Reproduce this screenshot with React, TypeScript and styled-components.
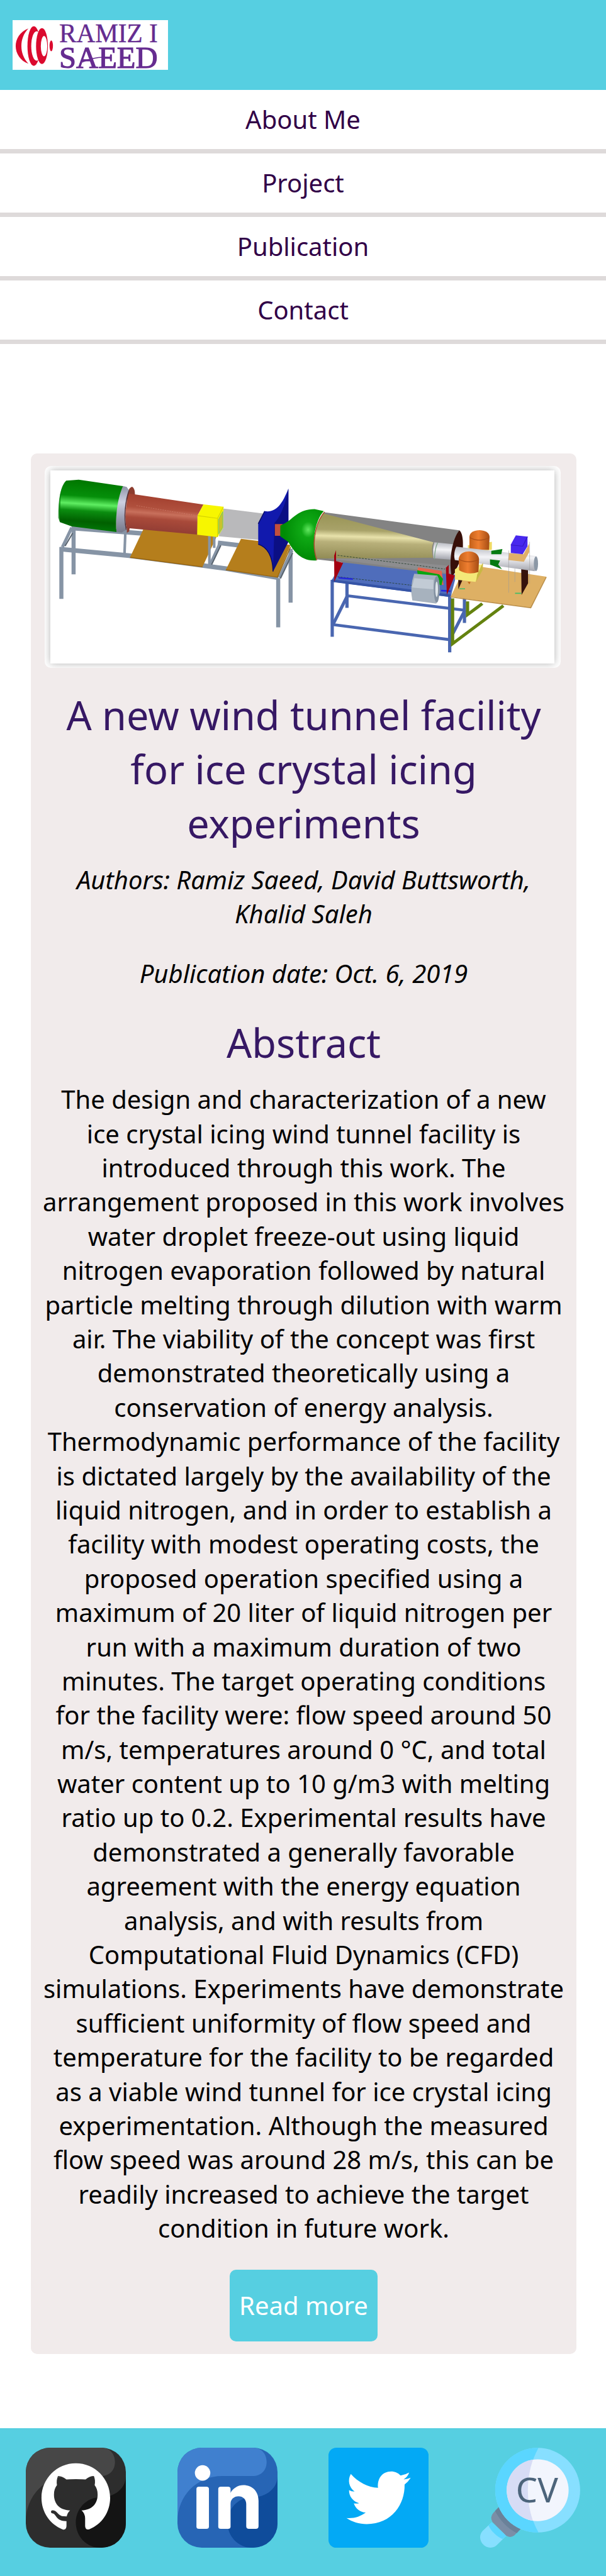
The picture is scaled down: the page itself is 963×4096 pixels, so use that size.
import React from "react";
import styled, { createGlobalStyle } from "styled-components";

const GlobalStyle = createGlobalStyle`
  * { box-sizing: border-box; }
  body {
    margin: 0;
    background: #ffffff;
    color: #000000;
    font-family: "Noto Sans", "Open Sans", sans-serif;
    font-size: 40px;
    line-height: 1.36;
  }
  svg { display: block; overflow: visible; }
`;

const Header = styled.header`
  display: flex;
  align-items: center;
  padding: 32px 20px;
  background: #56cfe1;
`;

const LogoLink = styled.a`
  display: block;
  width: 247px;
`;

const NavList = styled.ul`
  margin: 0;
  padding: 0;
  list-style: none;
`;

const NavItem = styled.li`
  border-bottom: 7px solid #dedada;
`;

const NavLink = styled.a`
  display: block;
  padding: 20px 0;
  line-height: 54px;
  text-align: center;
  text-decoration: none;
  color: #310047;
`;

const Main = styled.main`
  padding: 174px 47px 118px 49px;
`;

const Card = styled.article`
  display: flex;
  flex-direction: column;
  align-items: center;
  padding: 20px 18px;
  border-radius: 10px;
  background: #f1ebeb;
  text-align: center;
`;

const Figure = styled.figure`
  align-self: stretch;
  margin: 0 7px 32px 4px;
  padding: 7px 10px 7px 9px;
  border-radius: 10px;
  background: #ffffff;
  overflow: hidden;
`;

const Picture = styled.div`
  background: #ffffff;
  box-shadow: 0 0 12px rgba(0, 0, 0, 0.3);
`;

const Heading = styled.h2`
  margin: 0 0 20px;
  font-size: 63px;
  font-weight: 400;
  line-height: 86px;
  color: #361864;
`;

const Meta = styled.p`
  margin: 0 0 40px;
  font-style: italic;
`;

const Abstract = styled.p`
  margin: 0 0 38px;
`;

const MoreButton = styled.button`
  padding: 30px 15px;
  border: 0;
  border-radius: 10px;
  background: #56cfe1;
  color: #ffffff;
  font: inherit;
  line-height: 54px;
  cursor: pointer;
`;

const Footer = styled.footer`
  display: grid;
  grid-template-columns: repeat(4, 1fr);
  justify-items: center;
  padding: 31px 0 45px;
  background: #56cfe1;
`;

const IconLink = styled.a`
  display: block;
  width: 159px;
`;

function Logo() {
  return (
    <svg viewBox="0 0 300 96" role="img" aria-label="Ramiz I Saeed">
      <rect width="300" height="96" fill="#fff" />
      <g fill="#db0a2e">
        <path d="M30.5 16C14 22 6 37 6 50c0 14 9 29 24.500 34C21 74 17 62 17 50s4-24 13.500-34z" />
        <ellipse cx="41" cy="50" rx="12.300" ry="38.300" />
        <ellipse cx="46.500" cy="50" rx="10.500" ry="28.500" fill="#fff" />
        <ellipse cx="56.700" cy="50" rx="11.400" ry="34.600" />
        <ellipse cx="60.700" cy="50.300" rx="6.200" ry="19.500" fill="#fff" />
        <ellipse cx="74.600" cy="49.600" rx="3.300" ry="10.500" />
      </g>
      <g fill="#652c90" stroke="#652c90" fontFamily="'Liberation Serif', serif" textAnchor="middle">
        <text x="185" y="42.500" fontSize="50" strokeWidth="0.500">RAMIZ I</text>
        <text x="185" y="92" fontSize="59" strokeWidth="1.400">SAEED</text>
      </g>
      <path d="M134 81q30-13 57-8" fill="none" stroke="#652c90" strokeWidth="2" />
    </svg>
  );
}

function WindTunnel() {
  return (
    <svg viewBox="0 0 973 373" role="img" aria-label="Wind tunnel facility">
      <defs>
        <linearGradient id="drum" x1="0" y1="0" x2="-0.08" y2="1">
          <stop offset="0" stopColor="#007800" />
          <stop offset="0.280" stopColor="#058f0a" />
          <stop offset="0.430" stopColor="#5fee62" />
          <stop offset="0.560" stopColor="#0b8d10" />
          <stop offset="0.760" stopColor="#006000" />
          <stop offset="1" stopColor="#00820a" />
        </linearGradient>
        <linearGradient id="ring" x1="0" y1="0" x2="0" y2="1">
          <stop offset="0" stopColor="#8f93a6" />
          <stop offset="0.350" stopColor="#cdd0e2" />
          <stop offset="0.700" stopColor="#9a9db0" />
          <stop offset="1" stopColor="#75798a" />
        </linearGradient>
        <linearGradient id="brick" x1="0" y1="0" x2="-0.15" y2="1">
          <stop offset="0" stopColor="#a3402f" />
          <stop offset="0.300" stopColor="#b0503d" />
          <stop offset="0.420" stopColor="#c8705c" />
          <stop offset="0.550" stopColor="#a94a3a" />
          <stop offset="1" stopColor="#873731" />
        </linearGradient>
        <radialGradient id="bulb" cx="0.640" cy="0.400" r="0.550">
          <stop offset="0" stopColor="#62e860" />
          <stop offset="0.280" stopColor="#0fa915" />
          <stop offset="1" stopColor="#008c05" />
        </radialGradient>
        <linearGradient id="cone" x1="0.080" y1="0" x2="0" y2="1">
          <stop offset="0.080" stopColor="#9c975a" />
          <stop offset="0.350" stopColor="#a8a269" />
          <stop offset="0.490" stopColor="#e8e2ab" />
          <stop offset="0.620" stopColor="#b8b07a" />
          <stop offset="1" stopColor="#918b55" />
        </linearGradient>
        <linearGradient id="pipe" x1="0.060" y1="0" x2="0" y2="1">
          <stop offset="0" stopColor="#b9bbc2" />
          <stop offset="0.400" stopColor="#f4f4f7" />
          <stop offset="1" stopColor="#9b9da6" />
        </linearGradient>
        <linearGradient id="tank" x1="0" y1="0" x2="1" y2="0">
          <stop offset="0" stopColor="#c4611a" />
          <stop offset="0.450" stopColor="#ee7e30" />
          <stop offset="1" stopColor="#a44c14" />
        </linearGradient>
      </defs>

      {/* left stand and contraction section */}
      <g transform="translate(-48 -48.700) scale(0.35714 0.33333)">
        <g stroke="#8694a5" fill="none">
          <path d="M260 470V748M194 590V890M1366 770V1055M1433 600V912" strokeWidth="22" />
          <path d="M188 602L560 640L1090 716L1366 768" strokeWidth="27" />
          <path d="M250 480L640 512M1040 565L1170 582" strokeWidth="26" />
          <path d="M200 590L250 478M1372 768L1440 610M1000 690L1052 568" strokeWidth="17" />
          <path d="M541 470L535 635" strokeWidth="14" />
        </g>
        <path d="M214 584L255 510M1378 772L1444 625M1006 692L1056 580" stroke="#59646f" strokeWidth="7" />
        <path d="M638 485L1035 525L957 705L565 650z" fill="#b57e1c" />
        <path d="M1165 542L1433 578L1362 765L1083 722z" fill="#b57e1c" />
        <path d="M565 650L957 705M1083 722L1362 765L1433 590" stroke="#986510" strokeWidth="5" fill="none" />
        <path d="M994 525V690M1020 525V595" stroke="#8694a5" strokeWidth="14" />
        <path d="M1060 366L1285 396L1262 549L1045 528z" fill="#b9b9bb" />
        <path d="M548 300Q555 245 577 241Q592 250 592 290L560 500L548 508z" fill="#8d3c2e" />
        <path d="M560 280L962 344L930 408L930 518L545 480Q530 380 560 280z" fill="url(#brick)" />
        <path d="M600 350L925 408" stroke="#d48a78" strokeWidth="2" strokeDasharray="7 6" />
        <path d="M525 236L547 242L560 262C540 320 530 420 545 490L520 506L492 502C485 400 495 300 525 236z" fill="url(#ring)" />
        <path d="M560 262C540 320 530 420 545 490" stroke="#553038" strokeWidth="5" fill="none" />
        <path d="M220 205L288 200L527 237C500 300 485 400 492 503L250 470L186 446C176 380 178 250 220 205z" fill="url(#drum)" />
        <path d="M220 205Q192 240 189 330L186 446L177 420Q176 250 220 205z" fill="#067e0a" opacity="0.700" />
        <path d="M962 343L1070 357L1068 480L1038 532L928 519L930 408z" fill="#f7f600" />
        <path d="M930 408L1038 424L1070 357M1038 424V532" fill="none" stroke="#d4d000" strokeWidth="4" />
        <path d="M1044 430L1066 385V476L1044 514z" fill="#c9c32c" stroke="#62b884" strokeWidth="3" />
        <path d="M1421 252V560L1338 732C1338 660 1310 590 1258 574V455L1293 382C1350 392 1385 350 1421 252z" fill="#1119ad" />
        <path d="M1421 252V560L1338 732L1346 450C1372 425 1405 350 1421 252z" fill="#0b0f84" />
        <path d="M1258 455L1293 382M1258 574Q1335 600 1338 732" stroke="#070a65" strokeWidth="5" fill="none" />
        <path d="M1348 457H1390V525H1348z" fill="#c24f3c" />
      </g>

      {/* evaporation chamber, its stand and the test section */}
      <g transform="translate(462 -48.700) scale(0.36996 0.33333)">
        <g stroke="#4966b0" strokeWidth="17" fill="none">
          <path d="M299 780V942M912 860V1030" />
          <path d="M300 872L912 956M228 1040L835 1127M228 1035L300 875M850 1095L915 955" />
          <path d="M222 780V1110M835 860V1200" />
        </g>
        <path d="M278 670L870 750L840 880L215 790z" fill="#4f6dbb" />
        <path d="M220 785L838 872" stroke="#3554a6" strokeWidth="15" />
        <path d="M180 388L885 493C850 560 838 650 848 750L660 728L130 660C118 560 140 450 180 388z" fill="#838383" />
        <path d="M150 650L848 745L845 700L420 655z" fill="#8d8d8f" />
        <path d="M176 396L750 562C740 590 742 620 748 652L420 655L135 656C118 560 140 450 176 396z" fill="url(#cone)" />
        <path d="M755 562L860 574L846 664L750 655Q745 600 755 562z" fill="url(#pipe)" />
        <path d="M772 564Q756 600 756 660" stroke="#7aa184" strokeWidth="4" fill="none" />
        <path d="M885 493C905 510 908 570 900 640L862 740L845 762C828 660 850 540 885 493z" fill="#370f08" />
        <path d="M-49 466L-22 450C20 425 45 370 130 370L178 382C135 430 110 560 140 668C50 675 15 600 -8 560L-49 528z" fill="url(#bulb)" />
        <path d="M182 386C140 440 108 560 142 666" fill="none" stroke="#a94e2e" strokeWidth="5" />
        <path d="M232 640L242 608V672L279 682L233 790z" fill="#a20010" />
        <path d="M250 638L660 695L810 718M250 762L640 812" stroke="#26402e" strokeWidth="3" strokeDasharray="10 6" fill="none" />
        <path d="M255 768L330 776M790 842L840 846" stroke="#2429da" strokeWidth="9" />
        <path d="M670 708L793 728L803 810L770 800L665 735z" fill="#e5644d" />
        <path d="M665 725L780 748L800 775L792 812L670 770z" fill="#0aa511" />
        <path d="M650 745L770 756Q785 780 782 860L765 918L640 900Q625 820 650 745z" fill="#a7b2be" />
        <path d="M650 770L750 780V835L638 825z" fill="#d4dce4" opacity="0.600" />
        <ellipse cx="767" cy="835" rx="15" ry="77" fill="#8290a0" />
        <ellipse cx="767" cy="835" rx="7" ry="45" fill="#dfe5ea" />
        <path d="M815 710L830 694V745L862 755L820 868z" fill="#a20010" />
        <path d="M1000 705L1339 762L1258 942L840 878L900 740z" fill="#deb064" />
        <path d="M840 880L1258 942L1339 764" stroke="#b98d48" strokeWidth="5" fill="none" />
        <path d="M850 888V1150L1115 930M928 905V982L1005 918" stroke="#64820f" strokeWidth="17" fill="none" />
        <path d="M1208 705L1244 690V800L1210 868zM880 770L902 780L880 835z" fill="#35120c" />
        <path d="M930 580L1055 560V606L930 615z" fill="#f0da62" />
        <path d="M938 530C940 480 1040 480 1043 530L1040 606H938z" fill="url(#tank)" />
        <path d="M870 588L1290 643C1298 665 1290 710 1278 730L862 665C855 640 860 605 870 588z" fill="url(#pipe)" />
        <ellipse cx="1285" cy="687" rx="11" ry="43" fill="#8c98a6" />
        <path d="M1052 612L1110 602L1104 632H1052zM1045 662L1098 668L1088 692L1108 718L1046 692z" fill="#067a12" />
        <path d="M1145 625L1220 632L1250 570V620L1222 675L1140 665z" fill="#dfaf68" />
        <path d="M1154 575L1180 522L1241 530V585L1216 632L1154 624z" fill="#4828ee" />
        <path d="M1154 578L1216 585L1241 530" stroke="#3419c0" strokeWidth="4" fill="none" />
        <path d="M1143 610V855M1175 715V792M1252 560V800" stroke="#9b9b9b" strokeWidth="2" />
        <path d="M862 720L885 700L1010 690L970 792L862 778z" fill="#f4e878" />
        <path d="M978 750L1008 680V720L972 792z" fill="#c8b843" />
        <path d="M882 660C885 600 985 600 988 660L985 735Q930 755 884 725z" fill="url(#tank)" />
        <path d="M883 662Q935 690 987 662M939 535Q990 565 1042 535" stroke="#a94e18" strokeWidth="4" fill="none" />
        <path d="M885 832H915M1176 858H1208" stroke="#41bd66" strokeWidth="6" />
        <path d="M928 792H944L938 806z" fill="#bd6718" />
      </g>
    </svg>
  );
}

interface TileProps {
  id: string;
  light: string;
  base: string;
  dark: string;
}

function SwirlTile({ id, light, base, dark }: TileProps) {
  return (
    <>
      <clipPath id={id}>
        <rect width="193" height="193" rx="47" />
      </clipPath>
      <g clipPath={`url(#${id})`}>
        <rect width="193" height="193" fill={base} />
        <path d="M0 0H146C162 0 172 12 172 27.500S162 54.700 144 54.700H86C38 54.700 0 92 0 143z" fill={light} />
        <path d="M193 54.700V193H143C117 193 96.500 171 96.500 144.500S117 96 143 96C172 96 193 78 193 54.700z" fill={dark} />
      </g>
    </>
  );
}

function GitHubIcon() {
  return (
    <svg viewBox="0 0 193 193">
      <SwirlTile id="tile-github" light="#474747" base="#2d2d2d" dark="#141414" />
      <g transform="translate(-50.500 -67.300) scale(0.3827 0.33333)">
        <path
          fill="#fff"
          d="M413 565Q431 582 431 612V656Q433 681 452 674C515 645 557 575 557 492C557 381 480 292 384 292C289 292 211 381 211 492C211 575 254 645 316 674Q335 682 337 656V627C303 628 290 610 281 594Q274 582 268 582A9 9 0 0 1 268 564C291 564 293 599 324 599L338 600Q342 578 355 565C300 562 274 525 274 473C274 450 279 435 289 419Q285 390 294 366Q313 366 337 386Q345 384 384 384Q425 384 433 386Q455 366 475 366Q484 390 479 419C489 435 494 450 494 473C494 525 467 562 413 565z"
        />
      </g>
    </svg>
  );
}

function LinkedInIcon() {
  return (
    <svg viewBox="0 0 193 193">
      <SwirlTile id="tile-linkedin" light="#4080cf" base="#2765b5" dark="#0f4c9b" />
      <g transform="translate(-341.500 -67.300) scale(0.3827 0.33333)" fill="#fff">
        <ellipse cx="1019" cy="348" rx="39" ry="45" />
        <rect x="988" y="428" width="63" height="244" rx="13" />
        <rect x="1098" y="428" width="62" height="244" rx="13" />
        <path d="M1159 464C1175 435 1198 419 1224 419C1270 419 1301 455 1301 510V656Q1301 672 1287 672H1253Q1239 672 1239 656V528C1239 500 1222 483 1200 483C1178 483 1159 500 1159 530z" />
      </g>
    </svg>
  );
}

function TwitterIcon() {
  return (
    <svg viewBox="0 0 193 193">
      <rect width="193" height="193" rx="15" fill="#03a9f5" />
      <g transform="translate(-65.200 -67.300) scale(0.3827 0.33333)">
        <path
          fill="#fff"
          d="M283 354C320 402 370 432 420 434C415 380 442 339 486 339C505 339 522 348 534 363Q557 359 577 346Q570 370 549 386Q568 384 585 376Q572 400 554 415C556 530 490 644 363 644C325 644 290 632 261 609C297 613 332 601 358 577C330 576 307 555 298 524Q312 527 325 523C296 515 273 485 274 448Q286 456 302 456C274 432 265 390 283 354z"
        />
      </g>
    </svg>
  );
}

function ResumeIcon() {
  return (
    <svg viewBox="0 0 193 193" role="img" aria-label="Curriculum vitae">
      <g transform="translate(-356.700 -67.300) scale(0.3827 0.33333)">
        <path d="M990 634L944 684C928 705 928 735 944 758C965 787 1000 787 1018 764L1064 712z" fill="#87dfff" />
        <path d="M990 634L974 652C990 690 1015 715 1045 731L1064 712z" fill="#5ad6ff" />
        <path d="M1026 546L998 580Q980 605 994 632L1062 710Q1083 728 1104 710L1136 673z" fill="#7b8ea6" />
        <path d="M1026 546L1007 568C1030 620 1070 670 1117 696L1136 673z" fill="#6a8199" />
        <ellipse cx="1222" cy="448" rx="214" ry="245" fill="#87dfff" />
        <path d="M1226 203C1105 200 1008 311 1008 448S1105 696 1226 693C1154 540 1154 356 1226 203z" fill="#5ad6ff" />
        <ellipse cx="1222" cy="448" rx="156" ry="179" fill="#f2f5fd" />
        <path d="M1198 271C1122 283 1066 358 1066 448S1122 613 1198 625C1164 510 1164 386 1198 271z" fill="#d7dcf5" />
      </g>
      <text x="69" y="106" fontSize="66" fill="#4c647b" fontFamily="'Noto Sans', sans-serif">CV</text>
    </svg>
  );
}

const sections = ["About Me", "Project", "Publication", "Contact"];

const profiles = [
  { label: "GitHub", Icon: GitHubIcon },
  { label: "LinkedIn", Icon: LinkedInIcon },
  { label: "Twitter", Icon: TwitterIcon },
  { label: "Curriculum vitae", Icon: ResumeIcon },
];

export default function App() {
  return (
    <>
      <GlobalStyle />
      <Header>
        <LogoLink href="#home">
          <Logo />
        </LogoLink>
      </Header>
      <nav>
        <NavList>
          {sections.map((name) => (
            <NavItem key={name}>
              <NavLink href="#section">{name}</NavLink>
            </NavItem>
          ))}
        </NavList>
      </nav>
      <Main>
        <Card>
          <Figure>
            <Picture>
              <WindTunnel />
            </Picture>
          </Figure>
          <Heading>A new wind tunnel facility for ice crystal icing experiments</Heading>
          <Meta>Authors: Ramiz Saeed, David Buttsworth, Khalid Saleh</Meta>
          <Meta>Publication date: Oct. 6, 2019</Meta>
          <Heading>Abstract</Heading>
          <Abstract>
            The design and characterization of a new ice crystal icing wind tunnel facility is introduced
            through this work. The arrangement proposed in this work involves water droplet freeze-out using
            liquid nitrogen evaporation followed by natural particle melting through dilution with warm air.
            The viability of the concept was first demonstrated theoretically using a conservation of energy
            analysis. Thermodynamic performance of the facility is dictated largely by the availability of
            the liquid nitrogen, and in order to establish a facility with modest operating costs, the
            proposed operation specified using a maximum of 20 liter of liquid nitrogen per run with a
            maximum duration of two minutes. The target operating conditions for the facility were: flow
            speed around 50 m/s, temperatures around 0 °C, and total water content up to 10 g/m3 with melting
            ratio up to 0.2. Experimental results have demonstrated a generally favorable agreement with the
            energy equation analysis, and with results from Computational Fluid Dynamics (CFD) simulations.
            Experiments have demonstrate sufficient uniformity of flow speed and temperature for the facility
            to be regarded as a viable wind tunnel for ice crystal icing experimentation. Although the
            measured flow speed was around 28 m/s, this can be readily increased to achieve the target
            condition in future work.
          </Abstract>
          <MoreButton type="button">Read more</MoreButton>
        </Card>
      </Main>
      <Footer>
        {profiles.map(({ label, Icon }) => (
          <IconLink key={label} href="#profile" aria-label={label}>
            <Icon />
          </IconLink>
        ))}
      </Footer>
    </>
  );
}
